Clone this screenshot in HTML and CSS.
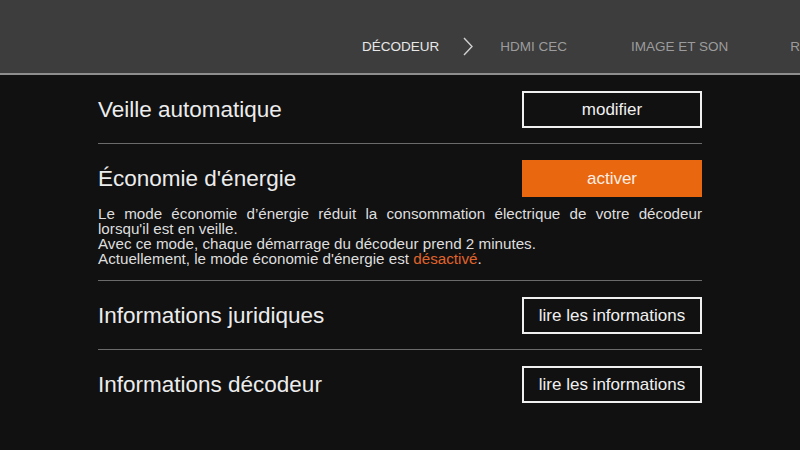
FILE: index.html
```html
<!DOCTYPE html>
<html lang="fr">
<head>
<meta charset="utf-8">
<title>Décodeur</title>
<link rel="stylesheet" href="styles.css">
</head>
<body>
<header class="topbar">
  <nav class="nav">
    <span class="nav-item active">DÉCODEUR</span>
    <svg class="chevron" width="10" height="19" viewBox="0 0 10 19" aria-hidden="true"><polyline points="1,1 9,9.5 1,18" fill="none" stroke="#d0d0d0" stroke-width="1.4"/></svg>
    <span class="nav-item">HDMI CEC</span>
    <span class="nav-item">IMAGE ET SON</span>
    <span class="nav-item">RÉSEAU</span>
  </nav>
</header>
<main class="settings">
  <section class="row">
    <div class="row-head">
      <h2 class="title">Veille automatique</h2>
      <button class="btn">modifier</button>
    </div>
  </section>
  <section class="row">
    <div class="row-head">
      <h2 class="title">Économie d'énergie</h2>
      <button class="btn btn-primary">activer</button>
    </div>
    <p class="desc">Le mode économie d’énergie réduit la consommation électrique de votre décodeur lorsqu'il est en veille.<br>Avec ce mode, chaque démarrage du décodeur prend 2 minutes.<br>Actuellement, le mode économie d'énergie est <span class="status">désactivé</span>.</p>
  </section>
  <section class="row">
    <div class="row-head">
      <h2 class="title">Informations juridiques</h2>
      <button class="btn">lire les informations</button>
    </div>
  </section>
  <section class="row last">
    <div class="row-head">
      <h2 class="title">Informations décodeur</h2>
      <button class="btn">lire les informations</button>
    </div>
  </section>
</main>
</body>
</html>
```
FILE: styles.css
```css
html, body {
  margin: 0;
  padding: 0;
  background: #111111;
  width: 800px;
  height: 450px;
  overflow: hidden;
  font-family: "Liberation Sans", Arial, sans-serif;
}

.topbar {
  height: 73px;
  background: #3d3d3d;
  border-bottom: 2px solid #8e8e8e;
  box-sizing: content-box;
  overflow: hidden;
}

.nav {
  display: flex;
  align-items: center;
  padding-top: 37px;
  padding-left: 362px;
  white-space: nowrap;
  height: 19px;
}

.nav-item {
  font-size: 13.5px;
  color: #9c9c9c;
  margin-right: 64px;
  line-height: 19px;
}

.nav-item.active {
  color: #e8e8e8;
  margin-right: 24px;
}

.nav-item:nth-of-type(3) {
  margin-right: 62px;
}

.chevron {
  flex: none;
  margin-right: 27px;
}

.settings {
  padding: 0 98px;
}

.row {
  padding: 16px 0 15px;
  border-bottom: 1px solid #6b6b6b;
}

.row.last {
  border-bottom: none;
}

.row-head {
  display: flex;
  justify-content: space-between;
  align-items: center;
}

.title {
  margin: 0;
  font-size: 22.5px;
  font-weight: normal;
  color: #ececec;
}

.btn {
  width: 180px;
  height: 37px;
  box-sizing: border-box;
  border: 2px solid #f0f0f0;
  background: #111111;
  color: #f0f0f0;
  font-family: "Liberation Sans", Arial, sans-serif;
  font-size: 17px;
  padding: 0;
}

.btn-primary {
  background: #e8670f;
  border-color: #e8670f;
  color: #fbeee4;
}

.desc {
  margin: 9px 0 -1px;
  font-size: 15.2px;
  line-height: 15px;
  color: #dedede;
  text-align: justify;
}

.status {
  color: #e0642c;
}
```
